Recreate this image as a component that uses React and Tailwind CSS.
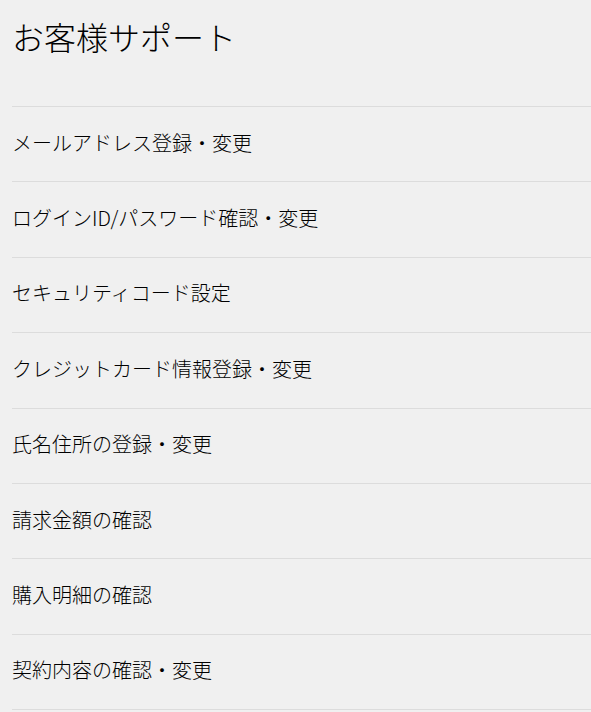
import React from 'react';

const items = [
  'メールアドレス登録・変更',
  'ログインID/パスワード確認・変更',
  'セキュリティコード設定',
  'クレジットカード情報登録・変更',
  '氏名住所の登録・変更',
  '請求金額の確認',
  '購入明細の確認',
  '契約内容の確認・変更',
];

export default function App() {
  return (
    <div
      className="min-h-screen bg-[#f0f0f0] pl-3 text-black"
      style={{ fontFamily: '"Noto Sans CJK JP", "Noto Sans", sans-serif' }}
    >
      <h1 className="pt-[16px] pb-[50px] text-[32px] leading-[40px] font-light">お客様サポート</h1>
      <ul className="border-t border-[#dcdcdc]">
        {items.map((label) => (
          <li
            key={label}
            className="flex h-[75.375px] items-center border-b border-[#dcdcdc] pb-[3px] text-[20px] font-light"
          >
            {label}
          </li>
        ))}
      </ul>
    </div>
  );
}
